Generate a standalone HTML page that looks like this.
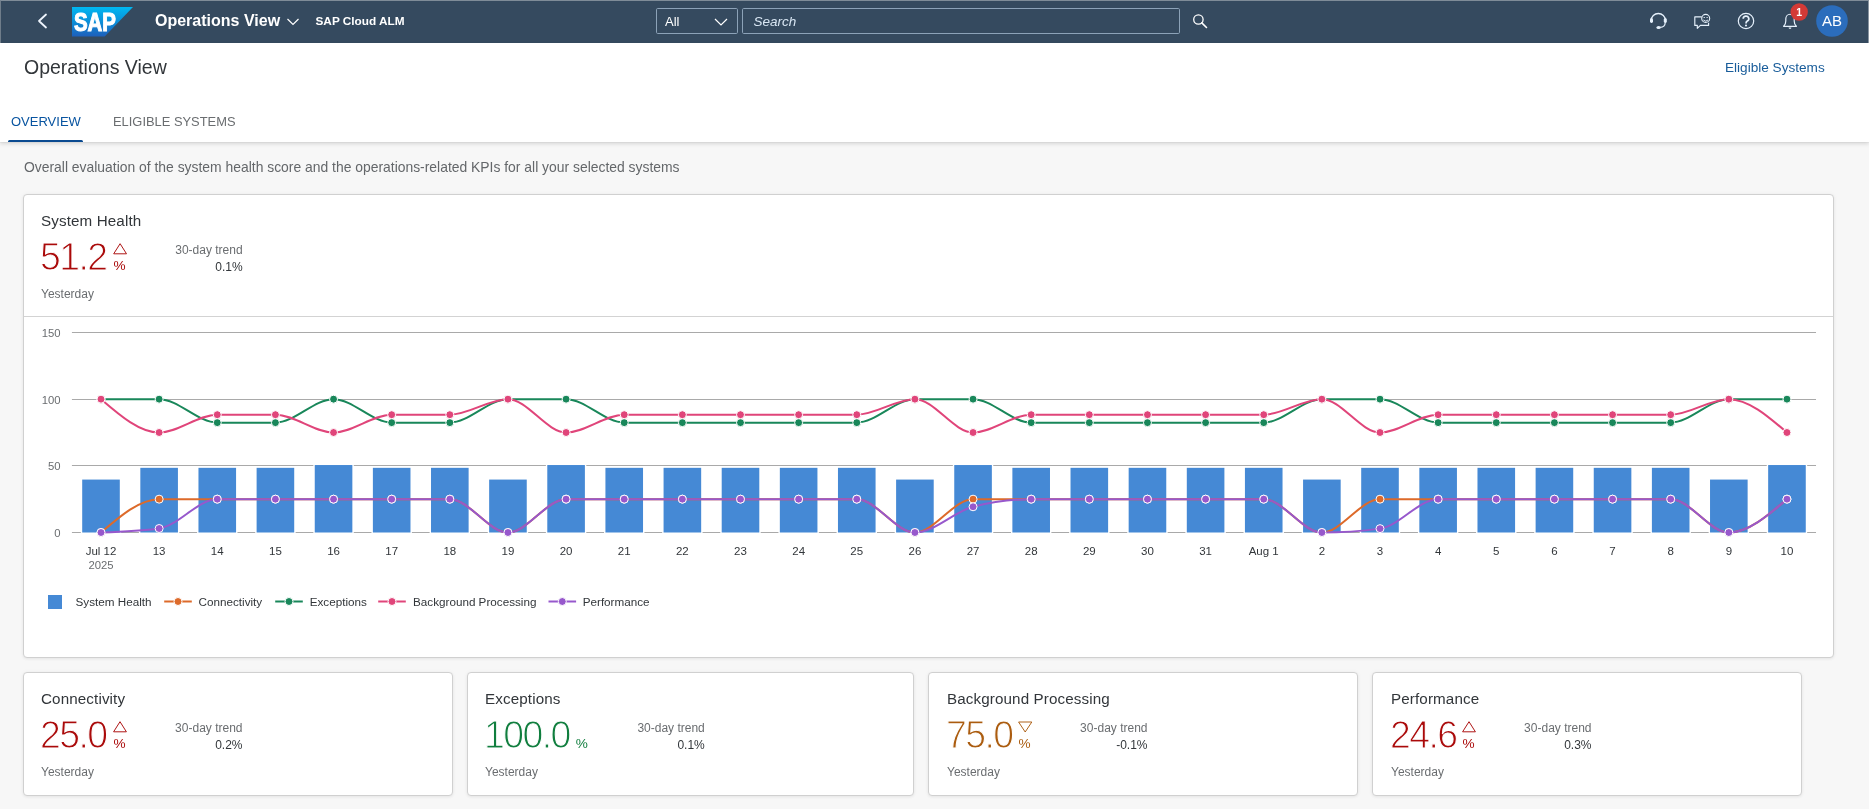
<!DOCTYPE html>
<html><head><meta charset="utf-8"><title>Operations View</title>
<style>
*{box-sizing:border-box;margin:0;padding:0}
html,body{width:1869px;height:809px;overflow:hidden}
body{font-family:"Liberation Sans",sans-serif;background:#f7f7f7;position:relative;color:#32363a}
.abs{position:absolute;white-space:nowrap}
svg,.abs{will-change:transform}
#shell{position:absolute;left:0;top:0;width:1869px;height:43px;background:#354a5f;border-top:1px solid #7f8c98;border-left:1px solid #6f7d8a;border-right:1px solid #8a96a2}
#phead{position:absolute;left:0;top:43px;width:1869px;height:99px;background:#fff;box-shadow:0 1px 0 rgba(0,0,0,0.03),0 2px 4px rgba(0,0,0,0.13)}
.card{position:absolute;background:#fff;border:1px solid #d0d0d0;border-radius:4px;box-shadow:0 0 5px rgba(0,0,0,0.035),0 1px 3px rgba(0,0,0,0.06)}
.ttl{font-size:15.6px;color:#32363a}
.big{font-size:34px;letter-spacing:-0.5px}
.lbl{font-size:12px;color:#6a6d70}
.val{font-size:12px;color:#32363a}
.neg{color:#bb0000}.pos{color:#107e3e}.crit{color:#c26a10}
</style></head><body>
<div id="shell">
<svg width="1869" height="43" viewBox="0 0 1869 43" style="position:absolute;left:-1px;top:-1px">
  <path d="M46 14.5 L39 21 L46 27.5" fill="none" stroke="#eef5fd" stroke-width="1.8" stroke-linecap="round" stroke-linejoin="round"/>
  <defs><linearGradient id="sapg" x1="0" y1="0" x2="0" y2="1"><stop offset="0" stop-color="#00b8f1"/><stop offset="0.5" stop-color="#0b8fd9"/><stop offset="1" stop-color="#1e5fbb"/></linearGradient></defs>
  <polygon points="72,7 133,7 104.7,36.6 72,36.6" fill="url(#sapg)"/>
  <text x="74" y="31" font-family="Liberation Sans" font-weight="700" font-size="25" fill="#fff" stroke="#fff" stroke-width="1.1" textLength="42" lengthAdjust="spacingAndGlyphs">SAP</text>
  <text x="155" y="25.8" font-family="Liberation Sans" font-weight="700" font-size="16" fill="#fff">Operations View</text>
  <path d="M287.5 19 L293 24.5 L298.5 19" fill="none" stroke="#fff" stroke-width="1.2"/>
  <text x="315.5" y="24.7" font-family="Liberation Sans" font-weight="700" font-size="11.8" fill="#fff">SAP Cloud ALM</text>
  <rect x="656.5" y="8.5" width="81" height="25" rx="1.2" fill="none" stroke="#8ca2b8" stroke-width="1"/>
  <text x="665" y="25.7" font-family="Liberation Sans" font-size="13" fill="#fff">All</text>
  <path d="M715 19 L721 25 L727 19" fill="none" stroke="#fff" stroke-width="1.2"/>
  <rect x="742.5" y="8.5" width="437" height="25" rx="1.2" fill="none" stroke="#8ca2b8" stroke-width="1"/>
  <text x="753.5" y="25.7" font-family="Liberation Sans" font-style="italic" font-size="13.5" fill="#d8e6f3">Search</text>
  <circle cx="1198.4" cy="19.5" r="4.7" fill="none" stroke="#fff" stroke-width="1.3"/>
  <path d="M1201.8 22.9 L1206.5 27.5" stroke="#fff" stroke-width="1.6" stroke-linecap="round"/>
  <!-- headset -->
  <path d="M1651.2 21 L1651.2 20.6 A7.1 7.1 0 0 1 1665.4 20.6 L1665.4 22.5" fill="none" stroke="#e6f1fc" stroke-width="1.3"/>
  <rect x="1650" y="18.2" width="3" height="4.8" rx="1.4" fill="#e6f1fc"/>
  <rect x="1663.8" y="18.2" width="3" height="4.8" rx="1.4" fill="#e6f1fc"/>
  <path d="M1665.2 22.8 Q1665 27.2 1660.2 27.4" fill="none" stroke="#e6f1fc" stroke-width="1.2"/>
  <ellipse cx="1658.6" cy="27.4" rx="2.2" ry="1.5" fill="#e6f1fc"/>
  <!-- feedback -->
  <path d="M1701.8 16.9 L1694.8 16.9 L1694.8 25.4 L1697.3 25.4 L1697.3 28.3 L1700.4 25.4 L1708.6 25.4 L1708.6 22.8" fill="none" stroke="#e6f1fc" stroke-width="1.15" stroke-linejoin="round"/>
  <circle cx="1705.7" cy="18.4" r="4" fill="none" stroke="#e6f1fc" stroke-width="1.1"/>
  <path d="M1703.3 20 Q1705.7 22.2 1708.1 20" fill="none" stroke="#e6f1fc" stroke-width="0.9"/>
  <path d="M1703.6 17.5 L1704.9 17.5 M1706.5 17.5 L1707.8 17.5" stroke="#e6f1fc" stroke-width="0.9"/>
  <!-- help -->
  <circle cx="1746" cy="21" r="7.7" fill="none" stroke="#e6f1fc" stroke-width="1.2"/>
  <path d="M1743.2 18.8 A2.8 2.6 0 1 1 1747.3 21 Q1746 21.8 1746 23.4" fill="none" stroke="#e6f1fc" stroke-width="1.7"/>
  <circle cx="1746" cy="25.5" r="1.05" fill="#e6f1fc"/>
  <!-- bell -->
  <path d="M1783.6 26.3 Q1785.8 24.3 1785.8 21 L1785.8 18.8 A4.2 4.6 0 0 1 1794.2 18.8 L1794.2 21 Q1794.2 24.3 1796.4 26.3 Z" fill="none" stroke="#e6f1fc" stroke-width="1.2" stroke-linejoin="round"/>
  <path d="M1788.6 27.6 A1.4 1.4 0 0 0 1791.4 27.6 Z" fill="#e6f1fc"/>
  <circle cx="1799.2" cy="12" r="8.7" fill="#d33a36"/>
  <text x="1799.2" y="15.8" text-anchor="middle" font-family="Liberation Sans" font-weight="700" font-size="10.5" fill="#fff">1</text>
  <circle cx="1832" cy="21" r="15.8" fill="#2b6dbc"/>
  <text x="1832" y="26.2" text-anchor="middle" font-family="Liberation Sans" font-size="15" fill="#fff">AB</text>
</svg>

</div>
<div id="phead">
  <div class="abs" style="left:24px;top:13.2px;font-size:19.5px;color:#32363a">Operations View</div>
  <div class="abs" style="left:1725px;top:17px;font-size:13.6px;color:#185c9a">Eligible Systems</div>
  <div class="abs" style="left:11px;top:70.6px;font-size:13px;color:#0854a0">OVERVIEW</div>
  <div class="abs" style="left:113px;top:70.6px;font-size:12.9px;color:#6a6d70">ELIGIBLE SYSTEMS</div>
  <div class="abs" style="left:8px;top:97px;width:75px;height:2px;background:#0a4a90;border-radius:1.5px 1.5px 0 0"></div>
</div>
<div class="abs" style="left:24px;top:159px;font-size:13.9px;color:#64676a">Overall evaluation of the system health score and the operations-related KPIs for all your selected systems</div>
<div class="card" style="left:23px;top:194px;width:1811px;height:464px"></div>
<div class="abs" style="left:24px;top:316px;width:1809px;height:1px;background:#d3d3d3"></div>
<div class="card" style="left:23px;top:672px;width:430px;height:124px"></div>
<div class="card" style="left:467px;top:672px;width:447px;height:124px"></div>
<div class="card" style="left:928px;top:672px;width:430px;height:124px"></div>
<div class="card" style="left:1372px;top:672px;width:430px;height:124px"></div>
<svg width="1869" height="809" style="position:absolute;left:0;top:0" font-family="Liberation Sans">
<text x="41" y="226" font-size="15.2" letter-spacing="0.12" fill="#32363a">System Health</text>
<g transform="translate(39.9,270.1) scale(0.97,1)"><text x="0" y="0" font-size="38.6" letter-spacing="-1.6" fill="#aa0a0a" stroke="#fff" stroke-width="1.1">51.2</text></g>
<path d="M120.1 243.7 L113.7 253.8 L126.5 253.8 Z" fill="none" stroke="#aa0a0a" stroke-width="0.95"/>
<text x="113.6" y="269.6" font-size="13.6" fill="#aa0a0a">%</text>
<text x="242.60000000000002" y="253.7" text-anchor="end" font-size="12" fill="#6a6d70">30-day trend</text>
<text x="242.60000000000002" y="271.4" text-anchor="end" font-size="12" fill="#32363a">0.1%</text>
<text x="41" y="297.6" font-size="12" fill="#6a6d70">Yesterday</text>
<text x="41" y="704" font-size="15.2" letter-spacing="0.12" fill="#32363a">Connectivity</text>
<g transform="translate(39.9,748.1) scale(0.97,1)"><text x="0" y="0" font-size="38.6" letter-spacing="-1.6" fill="#aa0a0a" stroke="#fff" stroke-width="1.1">25.0</text></g>
<path d="M120.0 721.7 L113.60000000000001 731.8 L126.4 731.8 Z" fill="none" stroke="#aa0a0a" stroke-width="0.95"/>
<text x="113.5" y="747.6" font-size="13.6" fill="#aa0a0a">%</text>
<text x="242.5" y="731.7" text-anchor="end" font-size="12" fill="#6a6d70">30-day trend</text>
<text x="242.5" y="749.4" text-anchor="end" font-size="12" fill="#32363a">0.2%</text>
<text x="41" y="775.6" font-size="12" fill="#6a6d70">Yesterday</text>
<text x="485" y="704" font-size="15.2" letter-spacing="0.12" fill="#32363a">Exceptions</text>
<g transform="translate(483.9,748.1) scale(0.97,1)"><text x="0" y="0" font-size="38.6" letter-spacing="-1.6" fill="#107e3e" stroke="#fff" stroke-width="1.1">100.0</text></g>
<text x="575.8" y="747.6" font-size="13.6" fill="#107e3e">%</text>
<text x="704.8" y="731.7" text-anchor="end" font-size="12" fill="#6a6d70">30-day trend</text>
<text x="704.8" y="749.4" text-anchor="end" font-size="12" fill="#32363a">0.1%</text>
<text x="485" y="775.6" font-size="12" fill="#6a6d70">Yesterday</text>
<text x="947" y="704" font-size="15.2" letter-spacing="0.12" fill="#32363a">Background Processing</text>
<g transform="translate(945.9,748.1) scale(0.97,1)"><text x="0" y="0" font-size="38.6" letter-spacing="-1.6" fill="#ab5c0f" stroke="#fff" stroke-width="1.1">75.0</text></g>
<path d="M1018.6 722 L1031.8 722 L1025.2 732 Z" fill="none" stroke="#ab5c0f" stroke-width="0.95"/>
<text x="1018.5" y="747.6" font-size="13.6" fill="#ab5c0f">%</text>
<text x="1147.5" y="731.7" text-anchor="end" font-size="12" fill="#6a6d70">30-day trend</text>
<text x="1147.5" y="749.4" text-anchor="end" font-size="12" fill="#32363a">-0.1%</text>
<text x="947" y="775.6" font-size="12" fill="#6a6d70">Yesterday</text>
<text x="1391" y="704" font-size="15.2" letter-spacing="0.12" fill="#32363a">Performance</text>
<g transform="translate(1389.9,748.1) scale(0.97,1)"><text x="0" y="0" font-size="38.6" letter-spacing="-1.6" fill="#aa0a0a" stroke="#fff" stroke-width="1.1">24.6</text></g>
<path d="M1469.0 721.7 L1462.6000000000001 731.8 L1475.4 731.8 Z" fill="none" stroke="#aa0a0a" stroke-width="0.95"/>
<text x="1462.5" y="747.6" font-size="13.6" fill="#aa0a0a">%</text>
<text x="1591.5" y="731.7" text-anchor="end" font-size="12" fill="#6a6d70">30-day trend</text>
<text x="1591.5" y="749.4" text-anchor="end" font-size="12" fill="#32363a">0.3%</text>
<text x="1391" y="775.6" font-size="12" fill="#6a6d70">Yesterday</text>
</svg>

<svg class="chart" width="1869" height="809" viewBox="0 0 1869 809" style="position:absolute;left:0;top:0">
<line x1="71.93" x2="1816.03" y1="532.5" y2="532.5" stroke="#a9a9a9" stroke-width="1"/>
<text x="60.5" y="536.9" text-anchor="end" font-size="11.3" fill="#6a6d70">0</text>
<line x1="71.93" x2="1816.03" y1="465.5" y2="465.5" stroke="#a9a9a9" stroke-width="1"/>
<text x="60.5" y="469.9" text-anchor="end" font-size="11.3" fill="#6a6d70">50</text>
<line x1="71.93" x2="1816.03" y1="399.5" y2="399.5" stroke="#a9a9a9" stroke-width="1"/>
<text x="60.5" y="403.9" text-anchor="end" font-size="11.3" fill="#6a6d70">100</text>
<line x1="71.93" x2="1816.03" y1="332.5" y2="332.5" stroke="#a9a9a9" stroke-width="1"/>
<text x="60.5" y="336.9" text-anchor="end" font-size="11.3" fill="#6a6d70">150</text>
<rect x="80.80" y="478.17" width="40.40" height="55.33" fill="#fff"/>
<rect x="82.20" y="479.57" width="37.6" height="52.93" fill="#4589d5"/>
<rect x="138.93" y="466.43" width="40.40" height="67.07" fill="#fff"/>
<rect x="140.33" y="467.83" width="37.6" height="64.67" fill="#4589d5"/>
<rect x="197.07" y="466.43" width="40.40" height="67.07" fill="#fff"/>
<rect x="198.47" y="467.83" width="37.6" height="64.67" fill="#4589d5"/>
<rect x="255.21" y="466.43" width="40.40" height="67.07" fill="#fff"/>
<rect x="256.61" y="467.83" width="37.6" height="64.67" fill="#4589d5"/>
<rect x="313.35" y="463.63" width="40.40" height="69.87" fill="#fff"/>
<rect x="314.75" y="465.03" width="37.6" height="67.47" fill="#4589d5"/>
<rect x="371.48" y="466.43" width="40.40" height="67.07" fill="#fff"/>
<rect x="372.88" y="467.83" width="37.6" height="64.67" fill="#4589d5"/>
<rect x="429.62" y="466.43" width="40.40" height="67.07" fill="#fff"/>
<rect x="431.02" y="467.83" width="37.6" height="64.67" fill="#4589d5"/>
<rect x="487.75" y="478.17" width="40.40" height="55.33" fill="#fff"/>
<rect x="489.15" y="479.57" width="37.6" height="52.93" fill="#4589d5"/>
<rect x="545.89" y="463.63" width="40.40" height="69.87" fill="#fff"/>
<rect x="547.29" y="465.03" width="37.6" height="67.47" fill="#4589d5"/>
<rect x="604.03" y="466.43" width="40.40" height="67.07" fill="#fff"/>
<rect x="605.43" y="467.83" width="37.6" height="64.67" fill="#4589d5"/>
<rect x="662.17" y="466.43" width="40.40" height="67.07" fill="#fff"/>
<rect x="663.57" y="467.83" width="37.6" height="64.67" fill="#4589d5"/>
<rect x="720.30" y="466.43" width="40.40" height="67.07" fill="#fff"/>
<rect x="721.70" y="467.83" width="37.6" height="64.67" fill="#4589d5"/>
<rect x="778.44" y="466.43" width="40.40" height="67.07" fill="#fff"/>
<rect x="779.84" y="467.83" width="37.6" height="64.67" fill="#4589d5"/>
<rect x="836.57" y="466.43" width="40.40" height="67.07" fill="#fff"/>
<rect x="837.97" y="467.83" width="37.6" height="64.67" fill="#4589d5"/>
<rect x="894.71" y="478.17" width="40.40" height="55.33" fill="#fff"/>
<rect x="896.11" y="479.57" width="37.6" height="52.93" fill="#4589d5"/>
<rect x="952.85" y="463.63" width="40.40" height="69.87" fill="#fff"/>
<rect x="954.25" y="465.03" width="37.6" height="67.47" fill="#4589d5"/>
<rect x="1010.99" y="466.43" width="40.40" height="67.07" fill="#fff"/>
<rect x="1012.38" y="467.83" width="37.6" height="64.67" fill="#4589d5"/>
<rect x="1069.12" y="466.43" width="40.40" height="67.07" fill="#fff"/>
<rect x="1070.52" y="467.83" width="37.6" height="64.67" fill="#4589d5"/>
<rect x="1127.26" y="466.43" width="40.40" height="67.07" fill="#fff"/>
<rect x="1128.66" y="467.83" width="37.6" height="64.67" fill="#4589d5"/>
<rect x="1185.39" y="466.43" width="40.40" height="67.07" fill="#fff"/>
<rect x="1186.80" y="467.83" width="37.6" height="64.67" fill="#4589d5"/>
<rect x="1243.53" y="466.43" width="40.40" height="67.07" fill="#fff"/>
<rect x="1244.93" y="467.83" width="37.6" height="64.67" fill="#4589d5"/>
<rect x="1301.67" y="478.17" width="40.40" height="55.33" fill="#fff"/>
<rect x="1303.07" y="479.57" width="37.6" height="52.93" fill="#4589d5"/>
<rect x="1359.80" y="466.43" width="40.40" height="67.07" fill="#fff"/>
<rect x="1361.20" y="467.83" width="37.6" height="64.67" fill="#4589d5"/>
<rect x="1417.94" y="466.43" width="40.40" height="67.07" fill="#fff"/>
<rect x="1419.34" y="467.83" width="37.6" height="64.67" fill="#4589d5"/>
<rect x="1476.08" y="466.43" width="40.40" height="67.07" fill="#fff"/>
<rect x="1477.48" y="467.83" width="37.6" height="64.67" fill="#4589d5"/>
<rect x="1534.21" y="466.43" width="40.40" height="67.07" fill="#fff"/>
<rect x="1535.62" y="467.83" width="37.6" height="64.67" fill="#4589d5"/>
<rect x="1592.35" y="466.43" width="40.40" height="67.07" fill="#fff"/>
<rect x="1593.75" y="467.83" width="37.6" height="64.67" fill="#4589d5"/>
<rect x="1650.49" y="466.43" width="40.40" height="67.07" fill="#fff"/>
<rect x="1651.89" y="467.83" width="37.6" height="64.67" fill="#4589d5"/>
<rect x="1708.62" y="478.17" width="40.40" height="55.33" fill="#fff"/>
<rect x="1710.03" y="479.57" width="37.6" height="52.93" fill="#4589d5"/>
<rect x="1766.76" y="463.63" width="40.40" height="69.87" fill="#fff"/>
<rect x="1768.16" y="465.03" width="37.6" height="67.47" fill="#4589d5"/>
<path d="M101.00,532.50C120.38,515.83 139.76,499.17 159.13,499.17C178.51,499.17 197.89,499.17 217.27,499.17C236.65,499.17 256.03,499.17 275.41,499.17C294.79,499.17 314.17,499.17 333.55,499.17C352.92,499.17 372.30,499.17 391.68,499.17C411.06,499.17 430.44,499.17 449.82,499.17C469.20,499.17 488.58,532.50 507.95,532.50C527.33,532.50 546.71,499.17 566.09,499.17C585.47,499.17 604.85,499.17 624.23,499.17C643.61,499.17 662.99,499.17 682.37,499.17C701.74,499.17 721.12,499.17 740.50,499.17C759.88,499.17 779.26,499.17 798.64,499.17C818.02,499.17 837.40,499.17 856.77,499.17C876.15,499.17 895.53,532.50 914.91,532.50C934.29,532.50 953.67,499.17 973.05,499.17C992.43,499.17 1011.81,499.17 1031.18,499.17C1050.56,499.17 1069.94,499.17 1089.32,499.17C1108.70,499.17 1128.08,499.17 1147.46,499.17C1166.84,499.17 1186.22,499.17 1205.60,499.17C1224.97,499.17 1244.35,499.17 1263.73,499.17C1283.11,499.17 1302.49,532.50 1321.87,532.50C1341.25,532.50 1360.63,499.17 1380.00,499.17C1399.38,499.17 1418.76,499.17 1438.14,499.17C1457.52,499.17 1476.90,499.17 1496.28,499.17C1515.66,499.17 1535.04,499.17 1554.41,499.17C1573.79,499.17 1593.17,499.17 1612.55,499.17C1631.93,499.17 1651.31,499.17 1670.69,499.17C1690.07,499.17 1709.45,532.50 1728.83,532.50C1748.20,532.50 1767.58,515.83 1786.96,499.17" fill="none" stroke="#dd6a2a" stroke-width="2"/>
<circle cx="101.00" cy="532.50" r="4" fill="#dd6a2a" stroke="#fff" stroke-width="1"/>
<circle cx="159.13" cy="499.17" r="4" fill="#dd6a2a" stroke="#fff" stroke-width="1"/>
<circle cx="217.27" cy="499.17" r="4" fill="#dd6a2a" stroke="#fff" stroke-width="1"/>
<circle cx="275.41" cy="499.17" r="4" fill="#dd6a2a" stroke="#fff" stroke-width="1"/>
<circle cx="333.55" cy="499.17" r="4" fill="#dd6a2a" stroke="#fff" stroke-width="1"/>
<circle cx="391.68" cy="499.17" r="4" fill="#dd6a2a" stroke="#fff" stroke-width="1"/>
<circle cx="449.82" cy="499.17" r="4" fill="#dd6a2a" stroke="#fff" stroke-width="1"/>
<circle cx="507.95" cy="532.50" r="4" fill="#dd6a2a" stroke="#fff" stroke-width="1"/>
<circle cx="566.09" cy="499.17" r="4" fill="#dd6a2a" stroke="#fff" stroke-width="1"/>
<circle cx="624.23" cy="499.17" r="4" fill="#dd6a2a" stroke="#fff" stroke-width="1"/>
<circle cx="682.37" cy="499.17" r="4" fill="#dd6a2a" stroke="#fff" stroke-width="1"/>
<circle cx="740.50" cy="499.17" r="4" fill="#dd6a2a" stroke="#fff" stroke-width="1"/>
<circle cx="798.64" cy="499.17" r="4" fill="#dd6a2a" stroke="#fff" stroke-width="1"/>
<circle cx="856.77" cy="499.17" r="4" fill="#dd6a2a" stroke="#fff" stroke-width="1"/>
<circle cx="914.91" cy="532.50" r="4" fill="#dd6a2a" stroke="#fff" stroke-width="1"/>
<circle cx="973.05" cy="499.17" r="4" fill="#dd6a2a" stroke="#fff" stroke-width="1"/>
<circle cx="1031.18" cy="499.17" r="4" fill="#dd6a2a" stroke="#fff" stroke-width="1"/>
<circle cx="1089.32" cy="499.17" r="4" fill="#dd6a2a" stroke="#fff" stroke-width="1"/>
<circle cx="1147.46" cy="499.17" r="4" fill="#dd6a2a" stroke="#fff" stroke-width="1"/>
<circle cx="1205.60" cy="499.17" r="4" fill="#dd6a2a" stroke="#fff" stroke-width="1"/>
<circle cx="1263.73" cy="499.17" r="4" fill="#dd6a2a" stroke="#fff" stroke-width="1"/>
<circle cx="1321.87" cy="532.50" r="4" fill="#dd6a2a" stroke="#fff" stroke-width="1"/>
<circle cx="1380.00" cy="499.17" r="4" fill="#dd6a2a" stroke="#fff" stroke-width="1"/>
<circle cx="1438.14" cy="499.17" r="4" fill="#dd6a2a" stroke="#fff" stroke-width="1"/>
<circle cx="1496.28" cy="499.17" r="4" fill="#dd6a2a" stroke="#fff" stroke-width="1"/>
<circle cx="1554.41" cy="499.17" r="4" fill="#dd6a2a" stroke="#fff" stroke-width="1"/>
<circle cx="1612.55" cy="499.17" r="4" fill="#dd6a2a" stroke="#fff" stroke-width="1"/>
<circle cx="1670.69" cy="499.17" r="4" fill="#dd6a2a" stroke="#fff" stroke-width="1"/>
<circle cx="1728.83" cy="532.50" r="4" fill="#dd6a2a" stroke="#fff" stroke-width="1"/>
<circle cx="1786.96" cy="499.17" r="4" fill="#dd6a2a" stroke="#fff" stroke-width="1"/>
<path d="M101.00,399.17C120.38,399.17 139.76,399.17 159.13,399.17C178.51,399.17 197.89,422.63 217.27,422.63C236.65,422.63 256.03,422.63 275.41,422.63C294.79,422.63 314.17,399.17 333.55,399.17C352.92,399.17 372.30,422.63 391.68,422.63C411.06,422.63 430.44,422.63 449.82,422.63C469.20,422.63 488.58,399.17 507.95,399.17C527.33,399.17 546.71,399.17 566.09,399.17C585.47,399.17 604.85,422.63 624.23,422.63C643.61,422.63 662.99,422.63 682.37,422.63C701.74,422.63 721.12,422.63 740.50,422.63C759.88,422.63 779.26,422.63 798.64,422.63C818.02,422.63 837.40,422.63 856.77,422.63C876.15,422.63 895.53,399.17 914.91,399.17C934.29,399.17 953.67,399.17 973.05,399.17C992.43,399.17 1011.81,422.63 1031.18,422.63C1050.56,422.63 1069.94,422.63 1089.32,422.63C1108.70,422.63 1128.08,422.63 1147.46,422.63C1166.84,422.63 1186.22,422.63 1205.60,422.63C1224.97,422.63 1244.35,422.63 1263.73,422.63C1283.11,422.63 1302.49,399.17 1321.87,399.17C1341.25,399.17 1360.63,399.17 1380.00,399.17C1399.38,399.17 1418.76,422.63 1438.14,422.63C1457.52,422.63 1476.90,422.63 1496.28,422.63C1515.66,422.63 1535.04,422.63 1554.41,422.63C1573.79,422.63 1593.17,422.63 1612.55,422.63C1631.93,422.63 1651.31,422.63 1670.69,422.63C1690.07,422.63 1709.45,399.17 1728.83,399.17C1748.20,399.17 1767.58,399.17 1786.96,399.17" fill="none" stroke="#19875a" stroke-width="2"/>
<circle cx="101.00" cy="399.17" r="4" fill="#19875a" stroke="#fff" stroke-width="1"/>
<circle cx="159.13" cy="399.17" r="4" fill="#19875a" stroke="#fff" stroke-width="1"/>
<circle cx="217.27" cy="422.63" r="4" fill="#19875a" stroke="#fff" stroke-width="1"/>
<circle cx="275.41" cy="422.63" r="4" fill="#19875a" stroke="#fff" stroke-width="1"/>
<circle cx="333.55" cy="399.17" r="4" fill="#19875a" stroke="#fff" stroke-width="1"/>
<circle cx="391.68" cy="422.63" r="4" fill="#19875a" stroke="#fff" stroke-width="1"/>
<circle cx="449.82" cy="422.63" r="4" fill="#19875a" stroke="#fff" stroke-width="1"/>
<circle cx="507.95" cy="399.17" r="4" fill="#19875a" stroke="#fff" stroke-width="1"/>
<circle cx="566.09" cy="399.17" r="4" fill="#19875a" stroke="#fff" stroke-width="1"/>
<circle cx="624.23" cy="422.63" r="4" fill="#19875a" stroke="#fff" stroke-width="1"/>
<circle cx="682.37" cy="422.63" r="4" fill="#19875a" stroke="#fff" stroke-width="1"/>
<circle cx="740.50" cy="422.63" r="4" fill="#19875a" stroke="#fff" stroke-width="1"/>
<circle cx="798.64" cy="422.63" r="4" fill="#19875a" stroke="#fff" stroke-width="1"/>
<circle cx="856.77" cy="422.63" r="4" fill="#19875a" stroke="#fff" stroke-width="1"/>
<circle cx="914.91" cy="399.17" r="4" fill="#19875a" stroke="#fff" stroke-width="1"/>
<circle cx="973.05" cy="399.17" r="4" fill="#19875a" stroke="#fff" stroke-width="1"/>
<circle cx="1031.18" cy="422.63" r="4" fill="#19875a" stroke="#fff" stroke-width="1"/>
<circle cx="1089.32" cy="422.63" r="4" fill="#19875a" stroke="#fff" stroke-width="1"/>
<circle cx="1147.46" cy="422.63" r="4" fill="#19875a" stroke="#fff" stroke-width="1"/>
<circle cx="1205.60" cy="422.63" r="4" fill="#19875a" stroke="#fff" stroke-width="1"/>
<circle cx="1263.73" cy="422.63" r="4" fill="#19875a" stroke="#fff" stroke-width="1"/>
<circle cx="1321.87" cy="399.17" r="4" fill="#19875a" stroke="#fff" stroke-width="1"/>
<circle cx="1380.00" cy="399.17" r="4" fill="#19875a" stroke="#fff" stroke-width="1"/>
<circle cx="1438.14" cy="422.63" r="4" fill="#19875a" stroke="#fff" stroke-width="1"/>
<circle cx="1496.28" cy="422.63" r="4" fill="#19875a" stroke="#fff" stroke-width="1"/>
<circle cx="1554.41" cy="422.63" r="4" fill="#19875a" stroke="#fff" stroke-width="1"/>
<circle cx="1612.55" cy="422.63" r="4" fill="#19875a" stroke="#fff" stroke-width="1"/>
<circle cx="1670.69" cy="422.63" r="4" fill="#19875a" stroke="#fff" stroke-width="1"/>
<circle cx="1728.83" cy="399.17" r="4" fill="#19875a" stroke="#fff" stroke-width="1"/>
<circle cx="1786.96" cy="399.17" r="4" fill="#19875a" stroke="#fff" stroke-width="1"/>
<path d="M101.00,399.17C120.38,415.83 139.76,432.50 159.13,432.50C178.51,432.50 197.89,414.70 217.27,414.70C236.65,414.70 256.03,414.70 275.41,414.70C294.79,414.70 314.17,432.50 333.55,432.50C352.92,432.50 372.30,414.70 391.68,414.70C411.06,414.70 430.44,414.70 449.82,414.70C469.20,414.70 488.58,399.17 507.95,399.17C527.33,399.17 546.71,432.50 566.09,432.50C585.47,432.50 604.85,414.70 624.23,414.70C643.61,414.70 662.99,414.70 682.37,414.70C701.74,414.70 721.12,414.70 740.50,414.70C759.88,414.70 779.26,414.70 798.64,414.70C818.02,414.70 837.40,414.70 856.77,414.70C876.15,414.70 895.53,399.17 914.91,399.17C934.29,399.17 953.67,432.50 973.05,432.50C992.43,432.50 1011.81,414.70 1031.18,414.70C1050.56,414.70 1069.94,414.70 1089.32,414.70C1108.70,414.70 1128.08,414.70 1147.46,414.70C1166.84,414.70 1186.22,414.70 1205.60,414.70C1224.97,414.70 1244.35,414.70 1263.73,414.70C1283.11,414.70 1302.49,399.17 1321.87,399.17C1341.25,399.17 1360.63,432.50 1380.00,432.50C1399.38,432.50 1418.76,414.70 1438.14,414.70C1457.52,414.70 1476.90,414.70 1496.28,414.70C1515.66,414.70 1535.04,414.70 1554.41,414.70C1573.79,414.70 1593.17,414.70 1612.55,414.70C1631.93,414.70 1651.31,414.70 1670.69,414.70C1690.07,414.70 1709.45,399.17 1728.83,399.17C1748.20,399.17 1767.58,415.83 1786.96,432.50" fill="none" stroke="#e0457a" stroke-width="2"/>
<circle cx="101.00" cy="399.17" r="4" fill="#e0457a" stroke="#fff" stroke-width="1"/>
<circle cx="159.13" cy="432.50" r="4" fill="#e0457a" stroke="#fff" stroke-width="1"/>
<circle cx="217.27" cy="414.70" r="4" fill="#e0457a" stroke="#fff" stroke-width="1"/>
<circle cx="275.41" cy="414.70" r="4" fill="#e0457a" stroke="#fff" stroke-width="1"/>
<circle cx="333.55" cy="432.50" r="4" fill="#e0457a" stroke="#fff" stroke-width="1"/>
<circle cx="391.68" cy="414.70" r="4" fill="#e0457a" stroke="#fff" stroke-width="1"/>
<circle cx="449.82" cy="414.70" r="4" fill="#e0457a" stroke="#fff" stroke-width="1"/>
<circle cx="507.95" cy="399.17" r="4" fill="#e0457a" stroke="#fff" stroke-width="1"/>
<circle cx="566.09" cy="432.50" r="4" fill="#e0457a" stroke="#fff" stroke-width="1"/>
<circle cx="624.23" cy="414.70" r="4" fill="#e0457a" stroke="#fff" stroke-width="1"/>
<circle cx="682.37" cy="414.70" r="4" fill="#e0457a" stroke="#fff" stroke-width="1"/>
<circle cx="740.50" cy="414.70" r="4" fill="#e0457a" stroke="#fff" stroke-width="1"/>
<circle cx="798.64" cy="414.70" r="4" fill="#e0457a" stroke="#fff" stroke-width="1"/>
<circle cx="856.77" cy="414.70" r="4" fill="#e0457a" stroke="#fff" stroke-width="1"/>
<circle cx="914.91" cy="399.17" r="4" fill="#e0457a" stroke="#fff" stroke-width="1"/>
<circle cx="973.05" cy="432.50" r="4" fill="#e0457a" stroke="#fff" stroke-width="1"/>
<circle cx="1031.18" cy="414.70" r="4" fill="#e0457a" stroke="#fff" stroke-width="1"/>
<circle cx="1089.32" cy="414.70" r="4" fill="#e0457a" stroke="#fff" stroke-width="1"/>
<circle cx="1147.46" cy="414.70" r="4" fill="#e0457a" stroke="#fff" stroke-width="1"/>
<circle cx="1205.60" cy="414.70" r="4" fill="#e0457a" stroke="#fff" stroke-width="1"/>
<circle cx="1263.73" cy="414.70" r="4" fill="#e0457a" stroke="#fff" stroke-width="1"/>
<circle cx="1321.87" cy="399.17" r="4" fill="#e0457a" stroke="#fff" stroke-width="1"/>
<circle cx="1380.00" cy="432.50" r="4" fill="#e0457a" stroke="#fff" stroke-width="1"/>
<circle cx="1438.14" cy="414.70" r="4" fill="#e0457a" stroke="#fff" stroke-width="1"/>
<circle cx="1496.28" cy="414.70" r="4" fill="#e0457a" stroke="#fff" stroke-width="1"/>
<circle cx="1554.41" cy="414.70" r="4" fill="#e0457a" stroke="#fff" stroke-width="1"/>
<circle cx="1612.55" cy="414.70" r="4" fill="#e0457a" stroke="#fff" stroke-width="1"/>
<circle cx="1670.69" cy="414.70" r="4" fill="#e0457a" stroke="#fff" stroke-width="1"/>
<circle cx="1728.83" cy="399.17" r="4" fill="#e0457a" stroke="#fff" stroke-width="1"/>
<circle cx="1786.96" cy="432.50" r="4" fill="#e0457a" stroke="#fff" stroke-width="1"/>
<path d="M101.00,532.50C120.38,531.83 139.76,531.17 159.13,528.50C178.51,525.83 197.89,499.17 217.27,499.17C236.65,499.17 256.03,499.17 275.41,499.17C294.79,499.17 314.17,499.17 333.55,499.17C352.92,499.17 372.30,499.17 391.68,499.17C411.06,499.17 430.44,499.17 449.82,499.17C469.20,499.17 488.58,532.50 507.95,532.50C527.33,532.50 546.71,499.17 566.09,499.17C585.47,499.17 604.85,499.17 624.23,499.17C643.61,499.17 662.99,499.17 682.37,499.17C701.74,499.17 721.12,499.17 740.50,499.17C759.88,499.17 779.26,499.17 798.64,499.17C818.02,499.17 837.40,499.17 856.77,499.17C876.15,499.17 895.53,532.50 914.91,532.50C934.29,532.50 953.67,511.83 973.05,506.77C992.43,501.70 1011.81,499.17 1031.18,499.17C1050.56,499.17 1069.94,499.17 1089.32,499.17C1108.70,499.17 1128.08,499.17 1147.46,499.17C1166.84,499.17 1186.22,499.17 1205.60,499.17C1224.97,499.17 1244.35,499.17 1263.73,499.17C1283.11,499.17 1302.49,532.50 1321.87,532.50C1341.25,532.50 1360.63,531.21 1380.00,528.63C1399.38,526.06 1418.76,499.17 1438.14,499.17C1457.52,499.17 1476.90,499.17 1496.28,499.17C1515.66,499.17 1535.04,499.17 1554.41,499.17C1573.79,499.17 1593.17,499.17 1612.55,499.17C1631.93,499.17 1651.31,499.17 1670.69,499.17C1690.07,499.17 1709.45,532.50 1728.83,532.50C1748.20,532.50 1767.58,515.83 1786.96,499.17" fill="none" stroke="#9758cc" stroke-width="2"/>
<circle cx="101.00" cy="532.50" r="4" fill="#9758cc" stroke="#fff" stroke-width="1"/>
<circle cx="159.13" cy="528.50" r="4" fill="#9758cc" stroke="#fff" stroke-width="1"/>
<circle cx="217.27" cy="499.17" r="4" fill="#9758cc" stroke="#fff" stroke-width="1"/>
<circle cx="275.41" cy="499.17" r="4" fill="#9758cc" stroke="#fff" stroke-width="1"/>
<circle cx="333.55" cy="499.17" r="4" fill="#9758cc" stroke="#fff" stroke-width="1"/>
<circle cx="391.68" cy="499.17" r="4" fill="#9758cc" stroke="#fff" stroke-width="1"/>
<circle cx="449.82" cy="499.17" r="4" fill="#9758cc" stroke="#fff" stroke-width="1"/>
<circle cx="507.95" cy="532.50" r="4" fill="#9758cc" stroke="#fff" stroke-width="1"/>
<circle cx="566.09" cy="499.17" r="4" fill="#9758cc" stroke="#fff" stroke-width="1"/>
<circle cx="624.23" cy="499.17" r="4" fill="#9758cc" stroke="#fff" stroke-width="1"/>
<circle cx="682.37" cy="499.17" r="4" fill="#9758cc" stroke="#fff" stroke-width="1"/>
<circle cx="740.50" cy="499.17" r="4" fill="#9758cc" stroke="#fff" stroke-width="1"/>
<circle cx="798.64" cy="499.17" r="4" fill="#9758cc" stroke="#fff" stroke-width="1"/>
<circle cx="856.77" cy="499.17" r="4" fill="#9758cc" stroke="#fff" stroke-width="1"/>
<circle cx="914.91" cy="532.50" r="4" fill="#9758cc" stroke="#fff" stroke-width="1"/>
<circle cx="973.05" cy="506.77" r="4" fill="#9758cc" stroke="#fff" stroke-width="1"/>
<circle cx="1031.18" cy="499.17" r="4" fill="#9758cc" stroke="#fff" stroke-width="1"/>
<circle cx="1089.32" cy="499.17" r="4" fill="#9758cc" stroke="#fff" stroke-width="1"/>
<circle cx="1147.46" cy="499.17" r="4" fill="#9758cc" stroke="#fff" stroke-width="1"/>
<circle cx="1205.60" cy="499.17" r="4" fill="#9758cc" stroke="#fff" stroke-width="1"/>
<circle cx="1263.73" cy="499.17" r="4" fill="#9758cc" stroke="#fff" stroke-width="1"/>
<circle cx="1321.87" cy="532.50" r="4" fill="#9758cc" stroke="#fff" stroke-width="1"/>
<circle cx="1380.00" cy="528.63" r="4" fill="#9758cc" stroke="#fff" stroke-width="1"/>
<circle cx="1438.14" cy="499.17" r="4" fill="#9758cc" stroke="#fff" stroke-width="1"/>
<circle cx="1496.28" cy="499.17" r="4" fill="#9758cc" stroke="#fff" stroke-width="1"/>
<circle cx="1554.41" cy="499.17" r="4" fill="#9758cc" stroke="#fff" stroke-width="1"/>
<circle cx="1612.55" cy="499.17" r="4" fill="#9758cc" stroke="#fff" stroke-width="1"/>
<circle cx="1670.69" cy="499.17" r="4" fill="#9758cc" stroke="#fff" stroke-width="1"/>
<circle cx="1728.83" cy="532.50" r="4" fill="#9758cc" stroke="#fff" stroke-width="1"/>
<circle cx="1786.96" cy="499.17" r="4" fill="#9758cc" stroke="#fff" stroke-width="1"/>
<text x="101.00" y="555" text-anchor="middle" font-size="11.5" fill="#32363a">Jul 12</text>
<text x="159.13" y="555" text-anchor="middle" font-size="11.5" fill="#32363a">13</text>
<text x="217.27" y="555" text-anchor="middle" font-size="11.5" fill="#32363a">14</text>
<text x="275.41" y="555" text-anchor="middle" font-size="11.5" fill="#32363a">15</text>
<text x="333.55" y="555" text-anchor="middle" font-size="11.5" fill="#32363a">16</text>
<text x="391.68" y="555" text-anchor="middle" font-size="11.5" fill="#32363a">17</text>
<text x="449.82" y="555" text-anchor="middle" font-size="11.5" fill="#32363a">18</text>
<text x="507.95" y="555" text-anchor="middle" font-size="11.5" fill="#32363a">19</text>
<text x="566.09" y="555" text-anchor="middle" font-size="11.5" fill="#32363a">20</text>
<text x="624.23" y="555" text-anchor="middle" font-size="11.5" fill="#32363a">21</text>
<text x="682.37" y="555" text-anchor="middle" font-size="11.5" fill="#32363a">22</text>
<text x="740.50" y="555" text-anchor="middle" font-size="11.5" fill="#32363a">23</text>
<text x="798.64" y="555" text-anchor="middle" font-size="11.5" fill="#32363a">24</text>
<text x="856.77" y="555" text-anchor="middle" font-size="11.5" fill="#32363a">25</text>
<text x="914.91" y="555" text-anchor="middle" font-size="11.5" fill="#32363a">26</text>
<text x="973.05" y="555" text-anchor="middle" font-size="11.5" fill="#32363a">27</text>
<text x="1031.18" y="555" text-anchor="middle" font-size="11.5" fill="#32363a">28</text>
<text x="1089.32" y="555" text-anchor="middle" font-size="11.5" fill="#32363a">29</text>
<text x="1147.46" y="555" text-anchor="middle" font-size="11.5" fill="#32363a">30</text>
<text x="1205.60" y="555" text-anchor="middle" font-size="11.5" fill="#32363a">31</text>
<text x="1263.73" y="555" text-anchor="middle" font-size="11.5" fill="#32363a">Aug 1</text>
<text x="1321.87" y="555" text-anchor="middle" font-size="11.5" fill="#32363a">2</text>
<text x="1380.00" y="555" text-anchor="middle" font-size="11.5" fill="#32363a">3</text>
<text x="1438.14" y="555" text-anchor="middle" font-size="11.5" fill="#32363a">4</text>
<text x="1496.28" y="555" text-anchor="middle" font-size="11.5" fill="#32363a">5</text>
<text x="1554.41" y="555" text-anchor="middle" font-size="11.5" fill="#32363a">6</text>
<text x="1612.55" y="555" text-anchor="middle" font-size="11.5" fill="#32363a">7</text>
<text x="1670.69" y="555" text-anchor="middle" font-size="11.5" fill="#32363a">8</text>
<text x="1728.83" y="555" text-anchor="middle" font-size="11.5" fill="#32363a">9</text>
<text x="1786.96" y="555" text-anchor="middle" font-size="11.5" fill="#32363a">10</text>
<text x="101.00" y="569" text-anchor="middle" font-size="11.3" fill="#6a6d70">2025</text>
<rect x="48" y="595" width="14" height="14" fill="#4589d5"/>
<text x="75.5" y="606" font-size="11.7" fill="#32363a">System Health</text>
<line x1="164.2" x2="191.79999999999998" y1="601.5" y2="601.5" stroke="#dd6a2a" stroke-width="2"/>
<circle cx="178.0" cy="601.5" r="4" fill="#dd6a2a" stroke="#fff" stroke-width="1"/>
<text x="198.5" y="606" font-size="11.7" fill="#32363a">Connectivity</text>
<line x1="275.2" x2="302.8" y1="601.5" y2="601.5" stroke="#19875a" stroke-width="2"/>
<circle cx="289.0" cy="601.5" r="4" fill="#19875a" stroke="#fff" stroke-width="1"/>
<text x="309.7" y="606" font-size="11.7" fill="#32363a">Exceptions</text>
<line x1="378.2" x2="405.8" y1="601.5" y2="601.5" stroke="#e0457a" stroke-width="2"/>
<circle cx="392.0" cy="601.5" r="4" fill="#e0457a" stroke="#fff" stroke-width="1"/>
<text x="413" y="606" font-size="11.7" fill="#32363a">Background Processing</text>
<line x1="548.5" x2="576.1" y1="601.5" y2="601.5" stroke="#9758cc" stroke-width="2"/>
<circle cx="562.3" cy="601.5" r="4" fill="#9758cc" stroke="#fff" stroke-width="1"/>
<text x="582.7" y="606" font-size="11.7" fill="#32363a">Performance</text>
</svg>
</body></html>
